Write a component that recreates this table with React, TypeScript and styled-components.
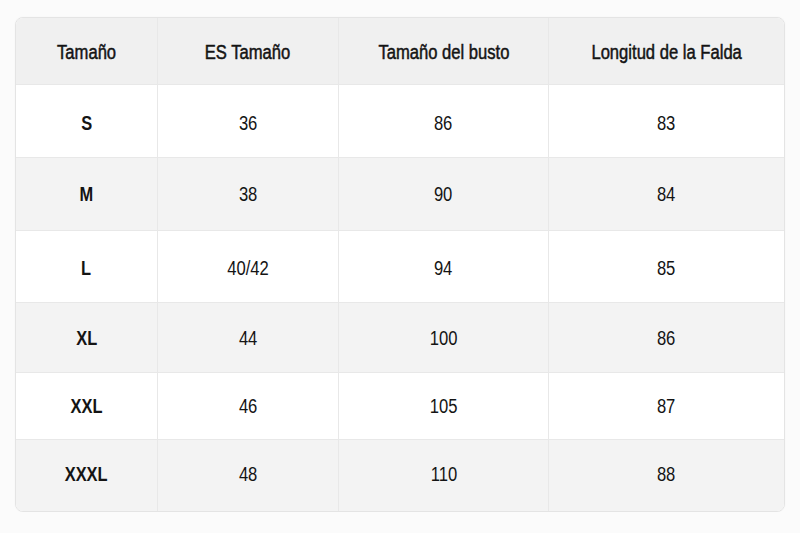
import React from "react";
import styled, { createGlobalStyle } from "styled-components";

const Global = createGlobalStyle`
  html, body {
    margin: 0;
    padding: 0;
    background: #fbfbfb;
  }
  body {
    font-family: "Liberation Sans", Arial, sans-serif;
    color: #141414;
  }
`;

const Page = styled.div`
  padding: 17px 15px 0 15px;
`;

const Table = styled.div`
  width: 770px;
  box-sizing: border-box;
  border: 1px solid #e4e4e4;
  border-radius: 8px;
  overflow: hidden;
  background: #ffffff;
  box-shadow: 0 0 2px rgba(0, 0, 0, 0.04);
`;

const Row = styled.div<{ $h: number; $shade: "head" | "grey" | "white"; $last?: boolean }>`
  display: grid;
  grid-template-columns: 141px 181px 210px 1fr;
  height: ${(p) => p.$h}px;
  box-sizing: border-box;
  border-bottom: ${(p) => (p.$last ? "none" : "1px solid #e8e8e8")};
  background: ${(p) => (p.$shade === "head" ? "#f0f0f0" : p.$shade === "grey" ? "#f3f3f3" : "#ffffff")};
`;

const Cell = styled.div<{ $kind: "head" | "size" | "num"; $shift: number }>`
  display: flex;
  align-items: center;
  justify-content: center;
  padding: ${(p) => (p.$shift > 0 ? p.$shift : 0)}px 0 ${(p) => (p.$shift < 0 ? -p.$shift : 0)}px;
  box-sizing: border-box;
  font-size: 20px;
  font-weight: ${(p) => (p.$kind === "size" ? 700 : 400)};
  -webkit-text-stroke: ${(p) => (p.$kind === "head" ? "0.5px #141414" : "0")};
  white-space: nowrap;
  & + & {
    border-left: 1px solid #e8e8e8;
  }
`;

/* the reference face is a narrow DIN-like sans; squeeze Liberation Sans to its width */
const Narrow = styled.span<{ $bold?: boolean }>`
  display: inline-block;
  transform: scaleX(${(p) => (p.$bold ? 0.82 : 0.83)});
`;

const headers = ["Tamaño", "ES Tamaño", "Tamaño del busto", "Longitud de la Falda"];

const rows: { h: number; shift: number; cells: string[] }[] = [
  { h: 73, shift: 5, cells: ["S", "36", "86", "83"] },
  { h: 73, shift: 1, cells: ["M", "38", "90", "84"] },
  { h: 72, shift: 3, cells: ["L", "40/42", "94", "85"] },
  { h: 70, shift: 2, cells: ["XL", "44", "100", "86"] },
  { h: 67, shift: 0, cells: ["XXL", "46", "105", "87"] },
  { h: 71, shift: -3, cells: ["XXXL", "48", "110", "88"] },
];

export default function App() {
  return (
    <>
      <Global />
      <Page>
        <Table>
          <Row $h={67} $shade="head">
            {headers.map((t) => (
              <Cell key={t} $kind="head" $shift={2}>
                <Narrow>{t}</Narrow>
              </Cell>
            ))}
          </Row>
          {rows.map((r, i) => (
            <Row key={r.cells[0]} $h={r.h} $shade={i % 2 === 1 ? "grey" : "white"} $last={i === rows.length - 1}>
              {r.cells.map((c, j) => (
                <Cell key={j} $kind={j === 0 ? "size" : "num"} $shift={r.shift}>
                  <Narrow $bold={j === 0}>{c}</Narrow>
                </Cell>
              ))}
            </Row>
          ))}
        </Table>
      </Page>
    </>
  );
}
